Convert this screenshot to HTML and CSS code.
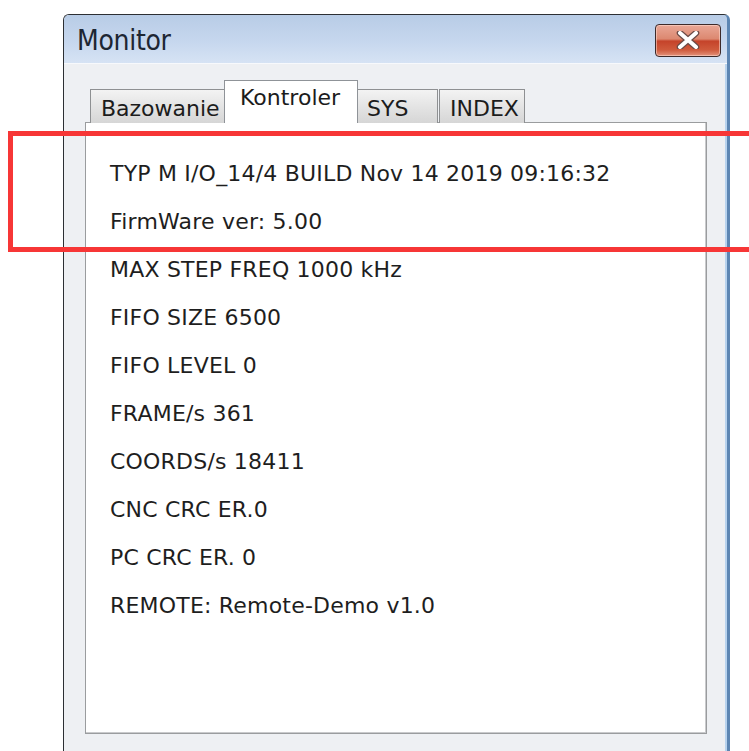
FILE: index.html
```html
<!DOCTYPE html>
<html lang="pl">
<head>
<meta charset="utf-8">
<title>Monitor</title>
<link rel="stylesheet" href="styles.css">
</head>
<body>
<div class="window">
  <div class="titlebar">
    <span class="title">Monitor</span>
    <button class="close" type="button" aria-label="Zamknij">
      <svg width="26" height="18" viewBox="0 0 26 18">
        <path d="M5 2 L21 16 M21 2 L5 16" stroke="#6a4a46" stroke-width="6.5" stroke-linecap="round"/>
        <path d="M5 2 L21 16 M21 2 L5 16" stroke="#ffffff" stroke-width="4" stroke-linecap="round"/>
      </svg>
    </button>
  </div>
  <div class="client">
    <div class="tabs">
      <div class="tab">Bazowanie</div>
      <div class="tab active">Kontroler</div>
      <div class="tab">SYS</div>
      <div class="tab">INDEX</div>
    </div>
    <div class="panel">
      <div class="row">TYP M I/O_14/4 BUILD Nov 14 2019 09:16:32</div>
      <div class="row">FirmWare ver: 5.00</div>
      <div class="row">MAX STEP FREQ 1000 kHz</div>
      <div class="row">FIFO SIZE 6500</div>
      <div class="row">FIFO LEVEL 0</div>
      <div class="row">FRAME/s 361</div>
      <div class="row">COORDS/s 18411</div>
      <div class="row">CNC CRC ER.0</div>
      <div class="row">PC CRC ER. 0</div>
      <div class="row">REMOTE: Remote-Demo v1.0</div>
    </div>
  </div>
</div>
<div class="highlight"></div>
</body>
</html>
```
FILE: styles.css
```css
html, body {
  margin: 0;
  padding: 0;
  background: #ffffff;
  overflow: hidden;
}

body {
  width: 749px;
  height: 751px;
  position: relative;
  font-family: "DejaVu Sans", Verdana, sans-serif;
}

/* dialog frame */
.window {
  margin: 14px 0 0 63px;
  width: 667px;
  height: 760px;
  box-sizing: border-box;
  border: 1px solid #2c2f33;
  border-right: 3px solid #5d86b3;
  border-radius: 6px 6px 0 0;
  background: #eef0f3;
  box-shadow: inset -2px 0 0 #b8d3ee;
  display: flex;
  flex-direction: column;
}

.titlebar {
  height: 48px;
  flex: none;
  display: flex;
  align-items: center;
  justify-content: space-between;
  padding: 0 6px 0 13px;
  background: linear-gradient(#b8cce6 0%, #c6d7ee 55%, #d6e3f4 100%);
  border-radius: 5px 5px 0 0;
  border-bottom: 1px solid #f7f9fc;
}

.title {
  font-family: "DejaVu Sans Condensed", "DejaVu Sans", sans-serif;
  font-size: 28px;
  color: #1d2633;
  letter-spacing: -0.3px;
  margin-top: 2px;
}

.close {
  width: 66px;
  height: 33px;
  margin-top: 2px;
  padding: 0;
  border: 1px solid #3d2a2a;
  border-radius: 4px;
  background: linear-gradient(#e9a796 0%, #dc8870 45%, #c5432a 52%, #cf5a3c 80%, #e3937c 100%);
  box-shadow: inset 0 0 0 1px rgba(255, 220, 210, 0.55);
  display: flex;
  align-items: center;
  justify-content: center;
}

.client {
  flex: 1;
  padding: 16px 20px 0 21px;
  display: flex;
  flex-direction: column;
}

/* tab strip */
.tabs {
  display: flex;
  align-items: flex-end;
  padding-left: 5px;
  height: 43px;
  position: relative;
  z-index: 1;
  margin-bottom: -1px;
}

.tab {
  height: 34px;
  box-sizing: border-box;
  border: 1px solid #8e9092;
  border-bottom: none;
  background: linear-gradient(#f3f3f3, #e4e4e4 50%, #d6d6d6);
  font-size: 22px;
  color: #1c1c1c;
  line-height: 34px;
  padding: 2px 0 0 10px;
}

.tab:nth-child(1) { width: 136px; }
.tab:nth-child(3) { width: 82px; }
.tab:nth-child(4) { width: 86px; margin-left: 1px; }

.tab.active {
  height: 43px;
  width: 134px;
  margin: 0 -2px 0 -2px;
  background: #ffffff;
  border-color: #8f9398;
  line-height: 34px;
  padding: 0 0 0 15px;
  z-index: 2;
}

.panel {
  flex: 1;
  background: #ffffff;
  border: 1px solid #9a9c9e;
  box-shadow: inset -1px -1px 0 #c9cacc;
  width: 622px;
  max-height: 612px;
  box-sizing: border-box;
  padding: 27px 0 0 24px;
}

.row {
  height: 48px;
  line-height: 48px;
  font-size: 22px;
  color: #1e1e1e;
  letter-spacing: 0.2px;
  white-space: nowrap;
}

/* red call-out frame drawn over the dialog */
.highlight {
  position: absolute;
  left: 8px;
  top: 131px;
  width: 760px;
  height: 121px;
  box-sizing: border-box;
  border: 5px solid #f73636;
}
```
